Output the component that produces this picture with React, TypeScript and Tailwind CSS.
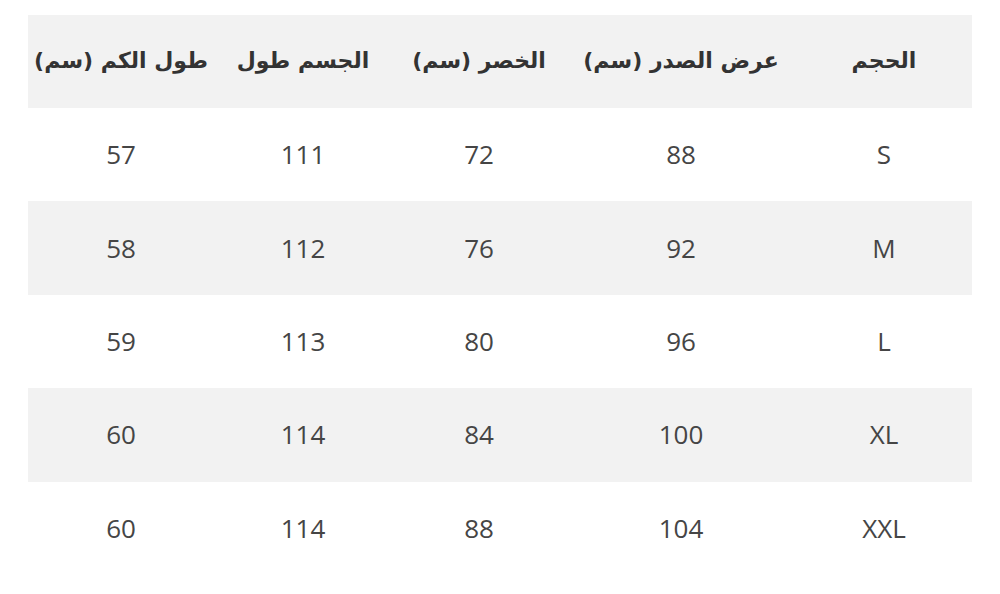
import React from "react";

const headers = ["الحجم", "عرض الصدر (سم)", "الخصر (سم)", "الجسم طول", "طول الكم (سم)"];
const rows = [
  ["S", "88", "72", "111", "57"],
  ["M", "92", "76", "112", "58"],
  ["L", "96", "80", "113", "59"],
  ["XL", "100", "84", "114", "60"],
  ["XXL", "104", "88", "114", "60"],
];
const widths = ["w-[176px]", "w-[230px]", "w-[174px]", "w-[178px]", "w-[186px]"];

export default function App() {
  return (
    <div className="w-[1000px] h-[594px] bg-white pt-[15px] pl-[28px]">
      <div dir="rtl" className="w-[944px] flex flex-col">
        <div className="flex h-[93px] bg-[#f2f2f2] items-center">
          {headers.map((h, i) => (
            <div
              key={i}
              className={`${widths[i]} text-center text-[22px] font-bold text-[#333333] pb-[2px] whitespace-nowrap`}
              style={{ fontFamily: '"DejaVu Sans", sans-serif' }}
            >
              {h}
            </div>
          ))}
        </div>
        {rows.map((r, ri) => (
          <div
            key={ri}
            className={`flex h-[93.4px] items-center ${ri % 2 === 1 ? "bg-[#f2f2f2]" : "bg-white"}`}
          >
            {r.map((c, ci) => (
              <div
                key={ci}
                className={`${widths[ci]} text-center text-[26px] text-[#454545]`}
                style={{ fontFamily: '"Open Sans", sans-serif' }}
              >
                {c}
              </div>
            ))}
          </div>
        ))}
      </div>
    </div>
  );
}
